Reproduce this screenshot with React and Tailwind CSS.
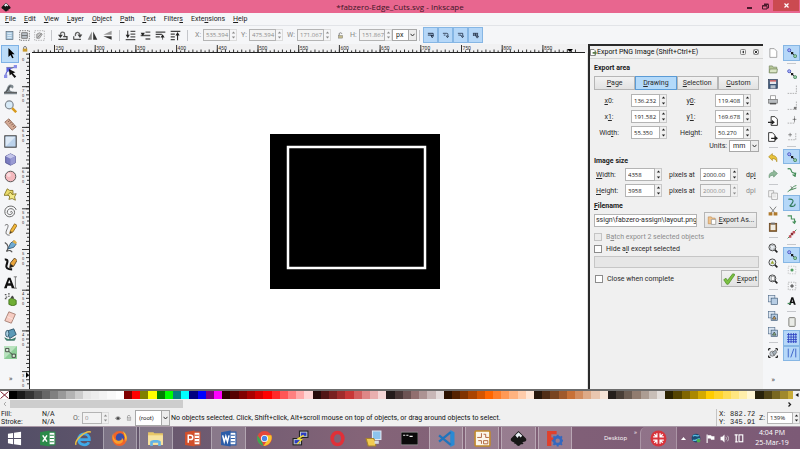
import React from "react";

/* ---------- shared helpers ---------- */

// Renders a label whose mnemonic letter is marked with a leading underscore.
function Mn({ t }) {
  const i = t.indexOf("_");
  if (i < 0) return <>{t}</>;
  return (
    <>
      {t.slice(0, i)}
      <span className="underline">{t[i + 1]}</span>
      {t.slice(i + 2)}
    </>
  );
}

function Svg({ children, className = "size-4", box = "0 0 16 16" }) {
  return (
    <svg viewBox={box} className={`block shrink-0 ${className}`} fill="none" aria-hidden="true">
      {children}
    </svg>
  );
}

function Spin({ id, label, value, width, disabled, tall }) {
  const tone = disabled ? "text-[#8c8c8c]" : "text-[#222]";
  return (
    <span className={`flex shrink-0 font-['Open_Sans',sans-serif] text-[6px] ${tall ? "h-[13px]" : "h-3"} ${width}`}>
      <input
        id={id}
        aria-label={label}
        defaultValue={value}
        disabled={disabled}
        className={`min-w-0 flex-1 border border-[#b4b4b4] pl-[2px] ${disabled ? "bg-[#f3f3f3]" : "bg-white"} ${tone}`}
      />
      <span className={`flex w-[7px] flex-col border border-l-0 ${disabled ? "border-[#dcdcdc]" : "border-[#c8c8c8]"} ${tone}`}>
        <button aria-label="Increase" className="flex flex-1 items-center justify-center">
          <Svg className="h-[3px] w-[5px]" box="0 0 5 3"><path d="M.8 2.600 2.500.6 4.200 2.600z" fill="currentColor" /></Svg>
        </button>
        <button aria-label="Decrease" className="flex flex-1 items-center justify-center">
          <Svg className="h-[3px] w-[5px]" box="0 0 5 3"><path d="M.8.4 2.500 2.400 4.200.4z" fill="currentColor" /></Svg>
        </button>
      </span>
    </span>
  );
}

function Drop({ id, label, value, width, height = "h-3" }) {
  return (
    <span className={`relative flex shrink-0 ${height} ${width}`}>
      <select id={id} aria-label={label} className="w-full appearance-none border border-[#a8a8a8] bg-white pl-[3px] text-[#222]">
        <option>{value}</option>
      </select>
      <span className="pointer-events-none absolute inset-y-0 right-0 flex w-[9px] items-center justify-center border border-[#a8a8a8] bg-[#ececec]">
        <Svg className="h-[4px] w-[5px]" box="0 0 5 4"><path d="M.5.8 2.500 3 4.500.8" stroke="#333" /></Svg>
      </span>
    </span>
  );
}

function VSep() {
  return <span className="h-[11px] w-px shrink-0 bg-[#c4c6ca]" />;
}

/* ---------- title, menu, control bar ---------- */

const inkDrop = (
  <>
    <path d="M8 1 15 8c1 1.500 0 3-2 3l-1.500.500c2 1 1 2-1 2-1 0-.5 1.500-2.500 1.500S6.500 13.500 5 13s-2-1-.5-1.500C2 11.500 0 10 1 8z" fill="#161616" />
    <path d="M8 2 11.500 5.500 10 7 8.500 5.500 7 7.500 5 5z" fill="#e8eef4" />
  </>
);

function TitleBar() {
  return (
    <header className="flex h-[13px] items-center bg-[#e8668f] font-['Open_Sans',sans-serif] text-[8px] text-[#3c1525]">
      <div className="w-[67px] pl-[1px]"><Svg className="size-[10px]">{inkDrop}</Svg></div>
      <h1 className="flex-1 text-center">*fabzero-Edge_Cuts.svg - Inkscape</h1>
      <div className="flex h-full w-[67px] justify-end">
        <button aria-label="Minimize" className="flex w-[15px] items-center justify-center">
          <span className="mt-[3px] h-[2px] w-[5px] bg-[#4a1a2c]" />
        </button>
        <button aria-label="Restore" className="flex w-4 items-center justify-center">
          <Svg className="size-[7px]" box="0 0 7 7">
            <path d="M2 1.500h4.500v3.500H5M.5 2.500h4.500v3.500H.5zM.5 3h4.500M2 1h4.500" stroke="#4a1a2c" />
          </Svg>
        </button>
        <button aria-label="Close" className="mr-px mb-[2px] flex w-[26px] items-center justify-center bg-[#cb4a50]">
          <Svg className="size-[5px]" box="0 0 5 5"><path d="m.5.5 4 4m0-4-4 4" stroke="#fff" strokeWidth="1.200" /></Svg>
        </button>
      </div>
    </header>
  );
}

const MENUS = ["_File", "_Edit", "_View", "_Layer", "_Object", "_Path", "_Text", "Filter_s", "Exte_nsions", "_Help"];

function MenuBar() {
  return (
    <nav className="flex h-[13px] items-center gap-2 border-b border-[#e2e4e8] bg-[#f5f6f8] pl-[5px] text-[#1c1c1c]">
      {MENUS.map((m) => (
        <button key={m}><Mn t={m} /></button>
      ))}
    </nav>
  );
}

const TOOLBAR_ICONS = [
  { n: "Select all", d: <><rect x="3" y="2" width="10" height="12" fill="#a9c8e0" stroke="#5a6a78" /><path d="M5 5h6M5 8h6M5 11h6" stroke="#f2f8fc" /></> },
  { n: "Select in all layers", d: <><rect x="1" y="1" width="14" height="14" stroke="#444" strokeDasharray="2 1.500" /><rect x="4" y="4" width="8" height="8" fill="#b9c1c8" stroke="#555" /><path d="M4 8h8" stroke="#555" /></> },
  { n: "Deselect", d: <><rect x="1" y="1" width="14" height="14" stroke="#999" strokeDasharray="2 1.500" /><path d="M4 12V6l4-2 4 2-4 6z" fill="#c7c7c7" stroke="#777" /><path d="m5 11 6-6" stroke="#777" /></> },
  null,
  { n: "Rotate left", d: <><path d="M2 13.500h12.500V9.500H9" stroke="#444" strokeWidth="1.800" /><path d="M5 7c0-5 6-5 6-1v3" stroke="#666" strokeWidth="1.800" /><path d="m1.500 7 3.500 4.500L8.500 7z" fill="#333" /></> },
  { n: "Rotate right", d: <><path d="M2 13.500h11M2.500 13V9" stroke="#555" strokeWidth="1.800" /><path d="M5 9c-1-7 6-7 6.500-2" stroke="#666" strokeWidth="1.800" /><path d="m8 6.500 3.500 5L15 6.500z" fill="#444" /></> },
  { n: "Flip horizontal", d: <><path d="M7 2v12H1z" fill="#888" /><path d="M9 2v12h6z" fill="#333" /></> },
  { n: "Flip vertical", d: <><path d="M14 7V1L2 7z" fill="#999" /><path d="M14 9v5L2 9z" fill="#333" /></> },
  null,
  { n: "Lower to bottom", d: <><path d="M1 14h14M8 2h7M8 6h7M8 10h7" stroke="#555" strokeWidth="1.500" /><path d="M4 1v7" stroke="#222" strokeWidth="1.500" /><path d="m1 7 3 5 3-5z" fill="#222" /></> },
  { n: "Lower", d: <><path d="M8 3h7M1 8h14M8 13h7" stroke="#555" strokeWidth="2" /><path d="m1 4 3 5 3-5z" fill="#222" /></> },
  { n: "Raise", d: <><path d="M1 3h14M1 6.500h9M1 10h6" stroke="#444" strokeWidth="1.800" /><path d="m8 11 3-5 3 5z" fill="#222" /><path d="M11 9v5" stroke="#222" /></> },
  { n: "Raise to top", d: <><path d="M1 2h14M1 6h6M1 10h6M1 14h6" stroke="#444" strokeWidth="1.800" /><path d="m8 8 3-5 3 5z" fill="#222" /><path d="M11 6v9" stroke="#222" strokeWidth="1.500" /></> },
  null,
];

const AFFECT = ["Scale stroke width", "Scale corners", "Move gradients", "Move patterns"];
const AFFECT_ART = [
  <path key="a" d="M2 3h12v4M2 7h9M9 8h6l-3 5z" stroke="#17233a" strokeWidth="2" />,
  <path key="b" d="M2 3h9c3 0 3 2 2 5M4 7h4M10 9h5l-2.500 4z" stroke="#17233a" strokeWidth="1.700" />,
  <path key="c" d="M2 3h11v5M3 7h6v2M10 9h5l-2.500 4z" stroke="#17233a" strokeWidth="1.700" />,
  <path key="d" d="M2 3h12M2 7h12M4 3v6M8 3v6M12 3v6M9 10h6l-3 4z" stroke="#17233a" strokeWidth="1.700" />,
];

function ControlBar() {
  return (
    <div className="flex h-[18px] items-center bg-[#f5f6f8] text-[#888]">
      <div className="flex items-center gap-[4px] pl-1">
        {TOOLBAR_ICONS.map((t, i) =>
          t ? (
            <button key={i} aria-label={t.n} title={t.n} className="w-[11px]"><Svg className="size-[11px]">{t.d}</Svg></button>
          ) : (
            <span key={i} className="flex w-[4px] justify-center"><VSep /></span>
          )
        )}
      </div>
      <div className="flex items-center pl-[6px]">
        <label htmlFor="cx" className="w-[8px]">X:</label>
        <Spin id="cx" value="535.394" width="w-[34px]" disabled />
        <label htmlFor="cy" className="w-[12px] pl-[4px]">Y:</label>
        <Spin id="cy" value="475.394" width="w-[34px]" disabled />
        <label htmlFor="cw" className="w-[14px] pl-[4px]">W:</label>
        <Spin id="cw" value="171.067" width="w-[34px]" disabled />
        <button aria-label="Lock ratio" className="flex w-[18px] justify-center">
          <Svg className="size-[7px]"><path d="M5 8V4c0-3 6-3 6 0" stroke="#777" strokeWidth="2" /><rect x="3" y="8" width="10" height="6" fill="#c2b98a" stroke="#777" /></Svg>
        </button>
        <label htmlFor="ch" className="w-[10px] pl-px">H:</label>
        <Spin id="ch" value="151.867" width="w-[33px]" disabled />
        <Drop label="Units" value="px" width="w-[25px]" />
      </div>
      <div className="flex items-center gap-[3px] pl-[2px]">
        <VSep />
        <div className="flex h-4">
          {AFFECT.map((a, i) => (
            <button key={a} aria-label={a} title={a} className="flex w-[15px] items-center justify-center border border-[#86b6e4] bg-[#b5d7f8]">
              <Svg className="size-[7px]">{AFFECT_ART[i]}</Svg>
            </button>
          ))}
        </div>
      </div>
    </div>
  );
}

/* ---------- tool box ---------- */

const TOOLS = [
  { n: "Selector", d: <path d="M5 0v13l3-3 2.500 5 2-1-2.500-5h4z" fill="#000" /> },
  { n: "Edit nodes", d: <><path d="M2 14C2 8 6 4 14 2.500" stroke="#5a63c8" strokeWidth="1.300" /><path d="M3 3h8" stroke="#777" /><path d="M12 0h4v4h-4zM0 12h4v4H0z" fill="#8a8fe8" /><path d="M3 3h5v5H3z" fill="#5a60e0" /><path d="m6 5 1 8 2-2 4 5 2-2-4-4 3-1z" fill="#111" /></> },
  { n: "Tweak", d: <><path d="M0 12c4 0 3-9 8-9 4 0 5 4 2 5-1-2-3-1-3 1 0 3 5 3 9 3v3H0z" fill="#7f8a90" /><path d="M2 12c4-1 3-7 6-7" stroke="#333" /><path d="M0 13h16" stroke="#555" /></> },
  { n: "Zoom", d: <><circle cx="6.500" cy="6" r="4.800" fill="#d7eaf7" stroke="#808890" strokeWidth="1.500" /><path d="m10 10 5 5" stroke="#d79a1c" strokeWidth="3" /></> },
  { n: "Measure", d: <><path d="m1 5 5-4 9 10-5 4z" fill="#d4aa95" stroke="#8c6656" /><path d="m7 3-2 2m4 0L7 7m4 0L9 9m4 0-2 2" stroke="#6d4a3c" /></> },
  { n: "Rectangle", d: <><rect x="1" y="1" width="14" height="14" fill="#bcd3ec" stroke="#333" strokeWidth="1.200" /><path d="M2 14V2h12z" fill="#dce9f6" /></> },
  { n: "3D box", d: <><path d="m8 1 6 3v8l-6 3-6-3V4z" fill="#7b7dc0" stroke="#4b4c8c" /><path d="M2 4l6 3 6-3-6-3z" fill="#c3c5ea" /><path d="M8 7v8l6-3V4z" fill="#9a9cd4" /></> },
  { n: "Ellipse", d: <><circle cx="8" cy="8" r="6.500" fill="#f4b9be" stroke="#555" strokeWidth="1.200" /><circle cx="6" cy="6" r="2.500" fill="#fadadd" /></> },
  { n: "Star", d: <><path d="m4 1 3 2 4 0 0 4-2 4-4-2-5 0 2-4z" fill="#eadb6b" stroke="#7c6c1c" /><path d="m8 5 2 3 5-1-2 4 1 4-4-2-4 1 1-3-2-3z" fill="#f3ea87" stroke="#7c6c1c" /></> },
  { n: "Spiral", d: <path d="M8 9c0-2 3-1 2 1-1 3-6 2-6-1 0-6 9-6 9 0 0 7-12 8-12-1C1 0 13-1 15 6" stroke="#666" strokeWidth="1.200" /> },
  { n: "Pencil", d: <><path d="M1 3c4-3 5 0 3 4s-3 8 3 8" stroke="#555" /><path d="m7 13 1-4 5-8 3 2-5 8z" fill="#f2b93a" stroke="#8a611a" /><path d="m7 13 1-3 2 1z" fill="#333" /></> },
  { n: "Bezier", d: <><path d="M1 3c5 3 5 7 2 11 4-2 6-1 7 1" stroke="#555" strokeWidth="1.500" /><path d="m5 11 3-7 4-3 3 4-3 4z" fill="#6eaad2" stroke="#2d516c" /><path d="m10 2 3-2 3 3-2 2z" fill="#e0b04a" /></> },
  { n: "Calligraphy", d: <><path d="M1 2c5-1 3 4 2 7s1 5 7 5" stroke="#111" strokeWidth="2.600" /><path d="m7 12 1-6 5-6 3 3-4 7z" fill="#e9a53c" stroke="#4c3a1c" /><path d="m7 12 1-5 4 3z" fill="#222" /></> },
  { n: "Text", d: <><path d="M0 15 5 2h3l5 13H9.500l-.8-3H4.200l-.8 3zM5 9h3L6.500 4.500z" fill="#111" /><path d="M12 1h4M14 1v14M12 15h4" stroke="#666" /></> },
  { n: "Spray", d: <><path d="M6 8 10 6l5 3v5l-4 2-5-2z" fill="#6fae35" stroke="#3c6b1a" /><path d="m8 6 2-3 2 2v2z" fill="#444" /><path d="M1 2h2M2 5h2M5 1h2M5 4h2M1 7h2" stroke="#555" strokeWidth="1.500" /></> },
  { n: "Eraser", d: <><path d="m6 1 8 3-5 11-8-3z" fill="#f6ccc2" stroke="#9c7468" /><path d="m4 7 7 3" stroke="#fbe6e0" /></> },
  { n: "Paint bucket", d: <><path d="m3 4 9-3 3 7-8 5z" fill="#5c9ab8" stroke="#23485c" /><ellipse cx="4" cy="7" rx="2" ry="4" fill="#aad0e2" stroke="#23485c" /><path d="M1 12c3 3 10 3 13 0l-1 3H3z" fill="#56a38c" stroke="#2a6656" /></> },
  { n: "Gradient", d: <><rect width="16" height="16" fill="#8dcd98" /><path d="M0 0h16L0 16z" fill="#b9e2bf" /><path d="m4 5 8 7" stroke="#333" /><path d="M2 3h4v4H2zM10 10h4v4h-4z" fill="#d8f0db" stroke="#333" /></> },
];

function ToolBox() {
  return (
    <aside className="flex w-5 shrink-0 flex-col bg-[#f5f6f8] pt-px pl-px">
      {TOOLS.map((t, i) => (
        <button
          key={t.n}
          aria-label={t.n}
          title={t.n}
          className={`flex min-h-0 w-[18px] flex-1 items-center justify-center border ${i === 0 ? "border-[#7fb2e5] bg-[#bcdcf8]" : "border-transparent"}`}
        >
          <Svg className={i === 0 ? "size-[11px]" : "size-[13px]"}>{t.d}</Svg>
        </button>
      ))}
      <button aria-label="More tools" className="h-7 shrink-0 pt-2 text-[8px] leading-none text-[#555]">»</button>
    </aside>
  );
}

/* ---------- canvas with rulers ---------- */

const STEP = 40.7;
const H_LABELS = [250, 300, 350, 400, 450, 500, 550, 600, 650, 700, 750, 800, 850];
const V_LABELS = [750, 700, 650, 600, 550, 500, 450, 400, 350];

function TopRuler() {
  const origin = 24.5;
  const minor = Array.from({ length: 134 }, (_, i) => origin - STEP / 2 + (i * STEP) / 10);
  return (
    <svg className="block h-[9px] w-full" aria-label="Horizontal ruler">
      {minor.filter((x) => x < 555).map((x, i) => (
        <path key={i} d={`M${x} ${i % 2 ? 5.5 : 6.5}V9`} stroke="#333" strokeWidth="1" />
      ))}
      {H_LABELS.map((n, i) => (
        <g key={n}>
          <path d={`M${origin + i * STEP} 1V9`} stroke="#333" />
          <text x={origin + 1 + i * STEP} y="6" fontSize="5" fill="#333">{n}</text>
        </g>
      ))}
      <path d="M2 8.500H555" stroke="#222" />
      <path d="m537 5h6l-3 3z" fill="#000" />
    </svg>
  );
}

function SideRuler() {
  const top = -7;
  const minor = Array.from({ length: 84 }, (_, i) => top + (i * STEP) / 10).filter((y) => y > 0 && y < 332);
  return (
    <svg className="block h-full w-[10px]" aria-label="Vertical ruler">
      {minor.map((y, i) => (
        <path key={i} d={`M${i % 2 ? 7 : 6} ${y}H9`} stroke="#333" />
      ))}
      {V_LABELS.map((n, i) => (
        <g key={n}>
          <path d={`M2 ${top + i * STEP}H9`} stroke="#333" />
          {String(n).split("").map((c, k) => {
            const y = top + 5 + i * STEP + k * 5;
            return y > 4 ? <text key={k} x="2" y={y} fontSize="4" fill="#333">{c}</text> : null;
          })}
        </g>
      ))}
      <path d="M9.500 0V336" stroke="#222" />
      <path d="M6 319v6l3-3z" fill="#000" />
    </svg>
  );
}

function Canvas() {
  return (
    <main className="flex min-w-0 flex-1 flex-col bg-[#f1f1f2]">
      <div className="flex h-[9px]">
        <button aria-label="Lock guides" className="flex w-[10px] justify-center pt-[2px]">
          <Svg className="size-[6px]"><path d="M4 8V5c0-5 8-5 8 0v3" stroke="#555" strokeWidth="2" /><rect x="2" y="7" width="12" height="8" fill="#c99a2c" /></Svg>
        </button>
        <div className="min-w-0 flex-1"><TopRuler /></div>
      </div>
      <div className="flex min-h-0 flex-1">
        <SideRuler />
        <div className="min-w-0 flex-1 border-r border-[#e4e4e4] bg-white">
          <svg className="block h-full w-full" aria-label="Drawing">
            <rect x="240" y="81" width="170" height="155" fill="#000" />
            <rect x="258" y="94" width="137" height="121" fill="none" stroke="#fff" strokeWidth="2.500" />
          </svg>
        </div>
      </div>
    </main>
  );
}

/* ---------- export panel ---------- */

function Heading({ t }) {
  return <h2 className="font-bold text-[#1a1a1a]"><Mn t={t} /></h2>;
}

const pushBtn = "border border-[#b6b6b6] bg-linear-to-b from-[#f2f2f2] to-[#e2e2e2]";

const AREA_ROWS = [
  ["_x0:", "136.232", "y_0:", "119.408"],
  ["x_1:", "191.582", "y_1:", "169.678"],
  ["Wid_th:", "55.350", "Hei_ght:", "50.270"],
];

function ExportPanel() {
  return (
    <section className="flex w-[175px] shrink-0 flex-col border-t-2 border-l-2 border-[#2a2a2a] bg-[#f0f0f0] text-[#2a2a2a]">
      <div className="flex h-[13px] items-center border-b border-[#d4d4d4] pr-[4px]">
        <Svg className="size-[7px]"><path d="M1 1h8l3 3v11H1z" fill="#fff" stroke="#444" strokeWidth="1.500" /><path d="M6 7h5V4l5 5-5 5v-3H6z" fill="#5a7a4a" /></Svg>
        <span className="flex-1 text-[#111]">Export PNG Image (Shift+Ctrl+E)</span>
        <button aria-label="Iconify" className="mr-[7px] size-[6px]">
          <Svg className="size-[6px]" box="0 0 6 6"><rect x=".5" y=".5" width="5" height="5" rx="1" stroke="#888" /><path d="M4 1.500v3L2 3z" fill="#333" /></Svg>
        </button>
        <button aria-label="Close panel" className="size-[6px]">
          <Svg className="size-[6px]" box="0 0 6 6"><rect x=".5" y=".5" width="5" height="5" rx="1" stroke="#888" /><path d="m1.500 1.500 3 3m0-3-3 3" stroke="#333" /></Svg>
        </button>
      </div>

      <div className="flex flex-col px-[4px] pt-1">
        <Heading t="Export area" />
        <div className="mt-[3px] grid h-[14px] grid-cols-4">
          {["_Page", "_Drawing", "_Selection", "_Custom"].map((t, i) => (
            <button key={t} className={i === 1 ? "border border-[#5b9bd5] bg-[#b4dafa]" : pushBtn}><Mn t={t} /></button>
          ))}
        </div>
        <div className="mt-[4px] flex flex-col gap-[3px]">
          {AREA_ROWS.map(([a, av, b, bv]) => (
            <div key={a} className="flex h-[13px] items-center">
              <label htmlFor={a} className="w-[37px] pr-[7px] text-center"><Mn t={a} /></label>
              <Spin id={a} value={av} width="w-[36px]" tall />
              <label htmlFor={b} className="w-[48px] text-center"><Mn t={b} /></label>
              <Spin id={b} value={bv} width="w-[36px]" tall />
            </div>
          ))}
        </div>
        <div className="mt-px flex items-center justify-end gap-[2px]">
          <label htmlFor="units">Units:</label>
          <Drop id="units" value="mm" width="w-[30px]" />
        </div>

        <div className="mt-[4px]"><Heading t="Image size" /></div>
        <div className="mt-[2px] flex flex-col gap-[3px] pl-[2px]">
          {[["_Width:", "4358", false, "dp_i"], ["_Height:", "3958", true, "dpi"]].map(([l, v, off, dpi]) => (
            <div key={l} className="flex h-[13px] items-center">
              <label htmlFor={`s${v}`} className="w-[29px]"><Mn t={l} /></label>
              <Spin id={`s${v}`} value={v} width="w-[37px]" tall />
              <span className="w-[38px] pl-[7px] whitespace-nowrap">pixels at</span>
              <Spin id={`d${v}`} value="2000.00" width="w-[38px]" disabled={off} tall />
              <label htmlFor={`d${v}`} className={`pl-[8px] ${off ? "text-[#8c8c8c]" : ""}`}><Mn t={dpi} /></label>
            </div>
          ))}
        </div>

        <div className="mt-[4px]"><Heading t="_Filename" /></div>
        <div className="mt-px flex h-4 items-center justify-between pr-[2px]">
          <input aria-label="Filename" defaultValue="ssign\fabzero-assign\layout.png" className="h-[13px] w-[103px] border border-[#b4b4b4] bg-white pl-px" />
          <button className={`flex h-4 w-[53px] items-center justify-center gap-[2px] whitespace-nowrap ${pushBtn}`}>
            <Svg className="size-[10px]"><path d="M2 3h5l1 2h5v9H2z" fill="#f0c48c" stroke="#c28a4c" /><path d="M7 7h7v8H7z" fill="#fff" stroke="#888" /></Svg>
            <span><Mn t="_Export As..." /></span>
          </button>
        </div>

        <label className="mt-[3px] flex h-3 items-center gap-[4px] text-[#8c8c8c]">
          <input type="checkbox" disabled className="size-2 appearance-none border border-[#c4c4c4] bg-[#ebebeb]" />
          <span><Mn t="B_atch export 2 selected objects" /></span>
        </label>
        <label className="flex h-3 items-center gap-[4px]">
          <input type="checkbox" className="size-2 appearance-none border border-[#8c8c8c] bg-white" />
          <span><Mn t="Hide a_ll except selected" /></span>
        </label>
        <div role="progressbar" aria-label="Export progress" className="mt-px h-3 border border-[#c6c6c6] bg-[#e6e6e6]" />
        <div className="mt-[2px] flex items-center justify-between">
          <label className="flex items-center gap-[4px] pl-px">
            <input type="checkbox" className="size-2 appearance-none border border-[#8c8c8c] bg-white" />
            <span>Close when complete</span>
          </label>
          <button className={`flex h-[17px] w-[38px] items-center justify-center gap-[2px] ${pushBtn}`}>
            <Svg className="size-[12px]"><path d="m1 9 3-2 2 3 7-9 3 1-9 13H5z" fill="#7cc142" stroke="#4f8f28" /></Svg>
            <span><Mn t="_Export" /></span>
          </button>
        </div>
      </div>
    </section>
  );
}

/* ---------- command and snap bars ---------- */

const page = <path d="M3 1h7l4 4v10H3z" fill="#fff" stroke="#777" />;
const zoomGlass = <><circle cx="7" cy="7" r="5.500" fill="#e8edf2" stroke="#444" strokeWidth="1.500" /><path d="m11 11 4 4" stroke="#222" strokeWidth="2.500" /></>;
const copies = <><rect x="1" y="1" width="10" height="10" fill="#dbe6f2" stroke="#4f6a88" /><rect x="5" y="5" width="10" height="10" fill="#b7cde4" stroke="#33506e" /></>;

const COMMANDS = [
  { n: "New", d: page },
  { n: "Open", d: <><path d="M2 3h5l1 2h6v9H2z" fill="#b6c79a" stroke="#6d7f55" /><path d="M3 8h12l-1 6H2z" fill="#dbe6c6" stroke="#6d7f55" /></> },
  { n: "Save", d: <><rect x="1" y="1" width="14" height="14" fill="#3e5878" stroke="#24364e" /><rect x="3" y="2" width="10" height="6" fill="#e4e8ee" /><path d="M3 2h10v2H3z" fill="#c84848" /><rect x="4" y="10" width="8" height="5" fill="#b8c2ce" /></> },
  { n: "Print", d: <><path d="M4 7V1h8v6" fill="#fff" stroke="#777" /><rect x="1" y="7" width="14" height="6" fill="#b8bcc0" stroke="#666" /><path d="M3 14h10" stroke="#444" strokeWidth="2" /></> },
  null,
  { n: "Import", d: <><path d="M5 1h6l4 4v10H5z" fill="#fff" stroke="#222" strokeWidth="1.400" /><path d="M0 9h6V6l5 4-5 4v-3H0z" fill="#222" /></> },
  { n: "Export", d: <><path d="M1 1h6l4 4v10H1z" fill="#fff" stroke="#222" strokeWidth="1.400" /><path d="M5 9h6V6l5 4-5 4v-3H5z" fill="#222" /></> },
  null,
  { n: "Undo", d: <path d="M1 6 7 1v3c6 0 8 4 7 10-1-4-3-5-7-5v3z" fill="#e8c23a" stroke="#a88516" /> },
  { n: "Redo", d: <path d="M15 7 9 2v3C3 5 1 9 2 14c1-3 3-4 7-4v3z" fill="#8fb89a" stroke="#5f8f6c" /> },
  null,
  { n: "Copy", d: <><path d="M1 1h8v10H1z" fill="#f4f4f4" stroke="#999" /><path d="M6 5h9v10H6z" fill="#fff" stroke="#888" /><path d="M8 8h5M8 11h5" stroke="#bbb" /></> },
  { n: "Cut", d: <><path d="m3 1 8 10M13 1 5 11" stroke="#777" strokeWidth="1.500" /><path d="M1 10h6v5H1zM9 10h6v5H9z" fill="#b07a2c" /></> },
  { n: "Paste", d: <><rect x="2" y="2" width="12" height="13" fill="#8a5c28" stroke="#5c3b14" /><rect x="4" y="4" width="8" height="9" fill="#f0ede4" /><rect x="5" y="1" width="6" height="3" fill="#777" /></> },
  null,
  { n: "Zoom selection", d: <>{zoomGlass}<rect x="4" y="4" width="6" height="6" stroke="#777" strokeDasharray="1.500 1" /></> },
  { n: "Zoom drawing", d: <>{zoomGlass}<path d="m4 9 3-5 3 5z" fill="#9aa832" /></> },
  { n: "Zoom page", d: <>{zoomGlass}<rect x="5" y="3.500" width="5" height="7" fill="#fff" stroke="#666" /></> },
  null,
  { n: "Duplicate", d: copies },
  { n: "Clone", d: <>{copies}<path d="m7 13 3-5 3 5z" fill="#d9ab62" stroke="#333" /></> },
  { n: "Unlink clone", d: <>{copies}<path d="m7 13 3-5 3 5z" fill="#84b884" stroke="#333" /></> },
  null,
  { n: "Group", d: <><path d="M1 1h3M1 1v3M15 1h-3M15 1v3M1 15h3M1 15v-3M15 15h-3M15 15v-3" stroke="#222" strokeWidth="2" /><circle cx="7" cy="9" r="4" fill="#c4ccd4" stroke="#555" /><path d="m7 7 5-4 2 4-4 5z" fill="#a3afb9" stroke="#555" /></> },
];

const nodeLink = <><path d="m4 4 8 8" stroke="#222" strokeWidth="1.300" /><circle cx="3.500" cy="3.500" r="2.500" fill="#a7b2f6" stroke="#2b36b0" /><path d="M6.500 6.500h3.500v3.500H6.500z" fill="#111" /><circle cx="13" cy="13" r="2.500" fill="#9cd0a8" stroke="#2c6e48" /></>;
const dashBox = <path d="M1 15h14V1" stroke="#888" strokeDasharray="2.500 1.500" />;

const SNAPS = [
  { n: "Enable snapping", on: true, d: nodeLink },
  null,
  { n: "Snap bounding boxes", d: nodeLink },
  { n: "Snap to edges", d: dashBox },
  { n: "Snap to corners", d: <>{dashBox}<path d="M11 11h4v4h-4z" fill="#777" /></> },
  { n: "Snap edge midpoints", d: <><path d="M1 13h11V1" stroke="#888" strokeDasharray="2.500 1.500" /><path d="M9 7h6M12 4v6" stroke="#555" /></> },
  { n: "Snap box centers", d: <><path d="M2 14h12M14 14V2" stroke="#888" strokeDasharray="2.500 1.500" /><path d="M2 6h6M5 3v6" stroke="#555" /></> },
  null,
  { n: "Snap nodes", on: true, d: nodeLink },
  { n: "Snap to paths", d: <path d="M1 3c8-2 4 5 8 6 3 0 5 2 3 5M14 9l-1 6-4-3" stroke="#3f8a54" strokeWidth="1.800" /> },
  { n: "Snap intersections", d: <><path d="M1 14c5-2 6-8 14-10M3 12l12-4" stroke="#4c8f5c" strokeWidth="1.600" /><path d="m6 5 3 5" stroke="#555" /></> },
  { n: "Snap cusp nodes", on: true, d: <path d="M2 2c7-1 9 2 7 5-2 4-5 4-2 6 3 1 6 0 6-4M4 12l3 2" stroke="#2f7a5c" strokeWidth="1.800" /> },
  { n: "Snap smooth nodes", d: <path d="M1 3h6v5h5v6M9 12l3 3 2-4" stroke="#4c9460" strokeWidth="1.800" /> },
  { n: "Snap line midpoints", d: <><path d="m1 15 14-14" stroke="#4c9460" strokeWidth="1.600" /><path d="M3 10h4v4H3zM9 3h4v4H9z" fill="#c0525a" /><path d="M6 6h4v4H6z" fill="#8c3038" /></> },
  null,
  { n: "Snap others", on: true, d: nodeLink },
  { n: "Snap centers", d: <><path d="M2 2h12v12H2z" stroke="#aaa" strokeDasharray="2 2" /><circle cx="8" cy="8" r="2.500" fill="#4f9c5c" /></> },
  { n: "Snap rotation centers", d: <><path d="M2 14V2h12v12z" stroke="#888" strokeDasharray="2 2" /><path d="M5 8h6M8 5v6" stroke="#333" strokeWidth="1.500" /></> },
  { n: "Snap text baseline", d: <><path d="M3 14 7 2h3l4 12h-3l-1-3H7l-1 3zM7.500 9h2L8.500 5z" fill="#111" /><path d="M1 12h5" stroke="#3f8a54" strokeWidth="2" /></> },
  null,
  { n: "Snap to page", d: <rect x="3" y="1" width="10" height="14" rx="1" fill="#e9ebe6" stroke="#7b7b74" strokeWidth="1.500" /> },
  { n: "Snap to grid", on: true, d: <path d="M0 2.500h16M0 6.500h16M0 10.500h16M0 14h16M2.500 0v16M6.500 0v16M10.500 0v16M14 0v16" stroke="#2b3fc0" strokeWidth="1.300" /> },
  { n: "Snap to guides", on: true, d: <path d="M2 1v14M6 15 11 1M14 1v14" stroke="#3c62c8" strokeWidth="1.500" /> },
];

function IconColumn({ items, more, width, label }) {
  return (
    <aside aria-label={label} className={`flex shrink-0 flex-col bg-[#f5f6f8] pt-px ${width}`}>
      {items.map((it, i) =>
        it ? (
          <button
            key={i}
            aria-label={it.n}
            title={it.n}
            className={`flex min-h-0 flex-[15] items-center justify-center border ${it.on ? "border-[#86b6e4] bg-[#b5d7f8]" : "border-transparent"}`}
          >
            <Svg className="size-[10px]">{it.d}</Svg>
          </button>
        ) : (
          <span key={i} className="flex min-h-0 flex-[6] items-center justify-center"><span className="h-px w-[9px] bg-[#c6c8cc]" /></span>
        )
      )}
      <span className="h-7 shrink-0 pt-[15px] text-center text-[8px] leading-none text-[#555]">{more}</span>
    </aside>
  );
}

/* ---------- palette, scroll bar, status ---------- */

const PALETTE = (
  "000000 1a1a1a 333333 4d4d4d 666666 808080 999999 b3b3b3 cccccc e6e6e6 ececec f2f2f2 f9f9f9 ffffff " +
  "800000 ff0000 808000 ffff00 008000 00ff00 008080 00ffff 000080 0000ff 800080 ff00ff " +
  "2b0000 550000 800000 aa0000 d40000 ff0000 ff2a2a ff5555 ff8080 ffaaaa ffd5d5 " +
  "280b0b 501616 782121 a02c2c c83737 d35f5f de8787 e9afaf f4d7d7 " +
  "241c1c 483737 6c5353 916f6f ac9393 c8b7b7 e3dbdb " +
  "2b1100 552200 803300 aa4400 d45500 ff6600 ff7f2a ff9955 ffb380 ffccaa ffe6d5 " +
  "28170b 502d16 784421 a05a2c c87137 d38d5f deaa87 e9c6af f4e3d7 " +
  "241f1c 483e37 6c5d53 917c6f ac9d93 c8beb7 e3dedb " +
  "2b2200 554400 806600 aa8800 d4aa00 ffcc00 ffd42a ffdd55 ffe680 ffeeaa fff6d5 " +
  "28220b 504416 786721 a0892c c8ab37"
).split(" ");

function Palette() {
  return (
    <div className="flex h-[10px] border-t-2 border-[#6c6c6c] bg-[#f0f0f0]">
      <button aria-label="No colour" className="w-[9px] bg-white">
        <Svg className="h-2 w-[9px]" box="0 0 9 8"><path d="m.5.5 8 7m0-7-8 7" stroke="#7a2030" /></Svg>
      </button>
      {PALETTE.map((c, i) => (
        <button key={i} aria-label={`#${c}`} className={`min-w-0 ${i === PALETTE.length - 1 ? "flex-[0.6]" : "flex-1"}`} style={{ backgroundColor: `#${c}` }} />
      ))}
      <button aria-label="Palette menu" className="flex w-[7px] items-center justify-center">
        <Svg className="size-[4px]" box="0 0 4 4"><path d="M3.500 0v4L.5 2z" fill="#111" /></Svg>
      </button>
    </div>
  );
}

function ScrollRow() {
  return (
    <div className="flex h-[10px] items-center bg-[#f0f0f0]">
      <button aria-label="Scroll left" className="flex w-[10px] justify-center">
        <Svg className="size-[4px]" box="0 0 4 4"><path d="M3 0 1 2l2 2" stroke="#aaa" /></Svg>
      </button>
      <span className="h-2 w-[173px] bg-[#cdcdcd]" />
      <span className="flex-1" />
      <button aria-label="Scroll right" className="mr-2 flex w-[5px] justify-center">
        <Svg className="size-[5px]" box="0 0 5 5"><path d="m1.500.5 2 2-2 2" stroke="#222" strokeWidth="1.300" /></Svg>
      </button>
    </div>
  );
}

function StatusBar() {
  return (
    <footer className="flex h-[17px] items-center bg-[#f0f0f0] text-[#222]">
      <dl className="grid w-[73px] grid-cols-[41px_1fr] pl-px leading-2">
        <dt>Fill:</dt><dd>N/A</dd>
        <dt>Stroke:</dt><dd>N/A</dd>
      </dl>
      <label htmlFor="op" className="w-[9px] text-[#666]">O:</label>
      <Spin id="op" value="0" width="w-[27px]" disabled />
      <button aria-label="Toggle layer visibility" className="ml-[6px]">
        <Svg className="size-[6px]"><path d="M1 9c3-6 11-6 14 0-3 5-11 5-14 0z" fill="#999" stroke="#666" /><circle cx="8" cy="9" r="3" fill="#444" /></Svg>
      </button>
      <button aria-label="Lock layer" className="ml-[5px]">
        <Svg className="size-[6px]"><path d="M4 7V4c0-4 7-4 7 0" stroke="#888" strokeWidth="2" /><rect x="3" y="7" width="10" height="7" fill="#ccc" stroke="#888" /></Svg>
      </button>
      <span className="ml-[3px] flex text-[6px]"><Drop label="Layer" value="(root)" width="w-[35px]" height="h-4" /></span>
      <p className="min-w-0 flex-1 truncate pl-px text-[#111]">
        No objects selected. Click, Shift+click, Alt+scroll mouse on top of objects, or drag around objects to select.
      </p>
      <dl className="grid h-full grid-cols-[11px_25px] content-center border-l border-[#c4c4c4] pl-[2px] leading-2">
        <dt>X:</dt><dd className="font-['Liberation_Mono',monospace] text-[7px]">882.72</dd>
        <dt>Y:</dt><dd className="font-['Liberation_Mono',monospace] text-[7px]">345.91</dd>
      </dl>
      <label htmlFor="zoom" className="pr-[2px] pl-1">Z:</label>
      <Spin id="zoom" value="139%" width="w-[33px]" />
    </footer>
  );
}

/* ---------- Windows task bar ---------- */

function Office({ c, l }) {
  return (
    <>
      <path d="M8 2h7v12H8z" fill="#fff" stroke={c} />
      <path d="M10 5h4M10 8h4M10 11h4" stroke={c} />
      <path d="M1 2l9-1.500v15L1 14z" fill={c} />
      <path d={l} stroke="#fff" strokeWidth="1.400" />
    </>
  );
}

const APPS = [
  { n: "Excel", d: <Office c="#2b8a4a" l="m3.500 5 4 6m0-6-4 6" /> },
  { n: "Internet Explorer", d: <><path d="M3.500 9h10c0-7-10-7-10 0 0 6 8 6 9.500 2.500" stroke="#3fa9e8" strokeWidth="2.600" /><path d="M1 14c-2-4 9-14 14-12" stroke="#f0c040" strokeWidth="1.300" /></> },
  { n: "Firefox", on: true, d: <><circle cx="8" cy="8" r="7" fill="#f0642a" /><circle cx="8.500" cy="7" r="4" fill="#3a4fa8" /><path d="M2 3c0 5 2 7 5 7 2 0 4-1 3-3 3 2 1 6-3 6C3 13 0 8 2 3z" fill="#f9a02c" /><path d="M11 1c3 2 5 6 3 10-1-4-1-7-3-10z" fill="#fcc52f" /></> },
  { n: "File Explorer", on: true, d: <><path d="M1 2h5l1 1h8v11H1z" fill="#e9c766" /><path d="M1 5h14v9H1z" fill="#f7e3a0" /><path d="M3 15v-4c0-2 10-2 10 0v4h-2.500v-3h-5v3z" fill="#62b4e6" /></> },
  { n: "PowerPoint", d: <Office c="#d2502c" l="M4 12V5h2c3 0 3 4 0 4H4" /> },
  { n: "Word", on: true, d: <Office c="#2a5ca8" l="m2.500 5 1.500 6 1.500-5L7 11l1.500-6" /> },
  { n: "Chrome", d: <><circle cx="8" cy="8" r="7" fill="#e5483a" /><path d="M1.500 5 6 12l1 3C2 14 0 9 1.500 5z" fill="#3aa757" /><path d="M8 5h6.500C16 10 12 15 7 15l4-6z" fill="#f7c52f" /><circle cx="8" cy="8" r="3.300" fill="#fff" /><circle cx="8" cy="8" r="2.500" fill="#4a86e8" /></> },
  { n: "PuTTY", d: <><rect x="7" y="1" width="8" height="6" fill="#b8c0cc" stroke="#222" /><path d="M8.500 2.500h5v3h-5z" fill="#2c3cc0" /><rect x="1" y="8" width="8" height="6" fill="#b8c0cc" stroke="#222" /><path d="M2.500 9.500h5v3h-5z" fill="#2c3cc0" /><path d="m11 5-5 3 3 1-4 4" stroke="#f5e030" strokeWidth="1.300" /></> },
  { n: "Opera", d: <ellipse cx="8" cy="8" rx="5" ry="5.700" stroke="#e03038" strokeWidth="3.400" /> },
  { n: "Remote display", d: <><path d="M7 1h8v8H7z" fill="#8cc4ec" stroke="#dfeaf4" /><path d="M1 8h7l2 3v4H3z" fill="#f2cb52" stroke="#a8842a" /><path d="M9 10h4v3H9z" fill="#d4dae2" /></> },
  { n: "Command Prompt", d: <><rect x="0" y="2" width="16" height="12" fill="#0a0a0a" stroke="#999" strokeWidth=".7" /><path d="M2 5h2M5 5h2M8 6h3" stroke="#eee" /></> },
  { n: "Visual Studio Code", on: true, d: <><path d="M11.500 0 15.500 2v12l-4 2z" fill="#2a8ad4" /><path d="m1 5 11 9M1 11 12 2" stroke="#1f74bd" strokeWidth="2.200" /></> },
  { n: "KiCad", on: true, d: <><rect x="1" y="1" width="14" height="14" rx="1" fill="#fbf6ea" stroke="#c28a2c" strokeWidth="1.500" /><path d="M3 7h4V3M9 4h2v3h3M4 10h3v3M9 10h4v3H9z" stroke="#a8542c" strokeWidth=".8" /></> },
  { n: "Inkscape", on: true, d: inkDrop },
  { n: "FreeCAD", on: true, d: <><path d="M1 1h9v3H5v3h4v3H5v5H1z" fill="#e0402c" /><circle cx="11" cy="10" r="3.300" stroke="#3468c0" strokeWidth="2.400" /><path d="M11 4.500v2M11 13.500v2M5.500 10h2M14.500 10h1.500M7 6l1.500 1.500M15 6l-1.500 1.500M7 14l1.500-1.500M15 14l-1.500-1.500" stroke="#3468c0" strokeWidth="1.800" /></> },
];

function TaskBar() {
  return (
    <div className="flex h-[23px] shrink-0 items-center border-t border-[#a898a6] bg-linear-to-r from-[#514e66] via-[#846478] via-45% to-[#7c5a76] font-['Open_Sans',sans-serif] text-[6px] text-[#fff]">
      <button aria-label="Start" className="flex w-[29px] justify-center">
        <Svg className="size-[15px]"><path d="m1 3 5.500-1v5.500H1zM7.500 1.800 15 .8v6.700H7.500zM1 8.500h5.500V14L1 13zM7.500 8.500H15v6.700l-7.500-1z" fill="#fff" /></Svg>
      </button>
      <div className="flex h-full min-w-0 flex-1">
        {APPS.map((a) => (
          <div key={a.n} className="h-full flex-1 px-px">
            <button aria-label={a.n} title={a.n} className={`flex h-full w-full items-center justify-center ${a.on ? "border-x border-[#ffffff55] bg-[#ffffff2e]" : ""}`}>
              <Svg className="size-[17px]">{a.d}</Svg>
            </button>
          </div>
        ))}
      </div>
      <div className="flex h-full w-[227px] shrink-0 items-center">
        <span className="w-[59px] pl-[31px]">Desktop</span>
        <span className="w-[8px] self-start pl-[2px]">»</span>
        <button aria-label="Remote tool" className="flex h-full w-[37px] items-center justify-center rounded-tl-md border-x border-[#ffffff40] bg-[#ffffff22]">
          <Svg className="size-[17px]"><circle cx="8" cy="8" r="7.500" fill="#d8343c" /><path d="M3 6.500h3.500V3M13 6.500H9.500V3M3 9.500h3.500V13M13 9.500H9.500V13M4 4l2.500 2.500M12 4 9.500 6.500M4 12l2.500-2.500M12 12 9.500 9.500" stroke="#fff" strokeWidth="1.200" /></Svg>
        </button>
        <div className="flex flex-1 items-center gap-[5px] pl-[4px]">
          <button aria-label="Show hidden icons"><Svg className="h-[3px] w-[5px]" box="0 0 5 3"><path d="M0 3 2.500 0 5 3z" fill="#fff" /></Svg></button>
          <button aria-label="Network status"><Svg className="size-[10px]"><circle cx="8" cy="8" r="7" fill="#1d4c74" /><path d="M3 5c4-3 6 1 10-1M3 11c4 3 7-2 11-2" stroke="#5cc0e4" strokeWidth="2" /><circle cx="12" cy="12" r="3" fill="#4caf50" /></Svg></button>
          <button aria-label="Action center"><Svg className="size-[9px]"><path d="M2 1v15" stroke="#fff" strokeWidth="2" /><path d="M3 2h6l1 2h5v6H9L8 8H3z" fill="#fff" /></Svg></button>
          <button aria-label="Volume"><Svg className="size-[9px]"><path d="M1 5h3l4-4v14l-4-4H1z" fill="#fff" /><path d="M10 5c2 2 2 4 0 6M13 3c3 3 3 7 0 10" stroke="#ddd" strokeWidth="1.300" /></Svg></button>
          <button aria-label="Network"><Svg className="size-[10px]"><path d="M1 3h5M3.500 3v11M6 14H2" stroke="#fff" strokeWidth="2" /><rect x="8" y="3" width="6" height="11" stroke="#fff" strokeWidth="1.800" /></Svg></button>
        </div>
        <div className="w-[56px] text-center text-[7px] leading-[10px]">
          <div>4:04 PM</div>
          <div>25-Mar-19</div>
        </div>
      </div>
    </div>
  );
}

export default function App() {
  return (
    <div className="flex h-screen min-h-[449px] flex-col overflow-hidden font-['Roboto','Noto_Sans',sans-serif] text-[7px] leading-[10px]">
      <TitleBar />
      <MenuBar />
      <ControlBar />
      <div className="flex min-h-0 flex-1">
        <ToolBox />
        <Canvas />
        <ExportPanel />
        <IconColumn label="Commands" items={COMMANDS} more="»" width="w-5" />
        <IconColumn label="Snapping" items={SNAPS} more="" width="w-[17px]" />
      </div>
      <Palette />
      <ScrollRow />
      <StatusBar />
      <TaskBar />
    </div>
  );
}
